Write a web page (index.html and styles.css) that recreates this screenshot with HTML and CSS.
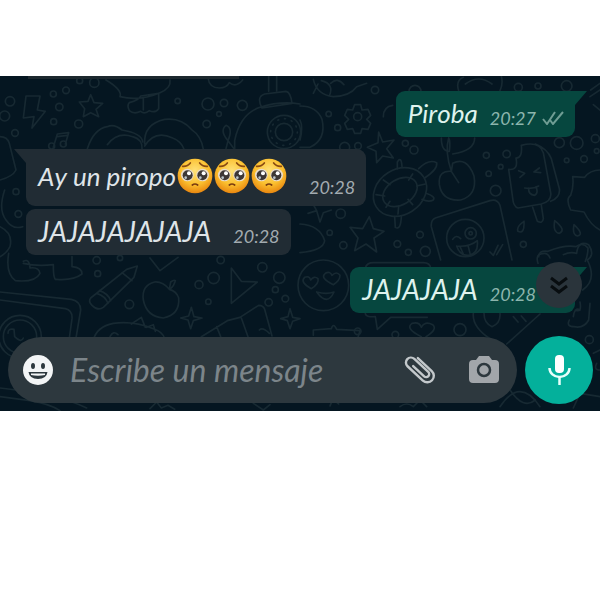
FILE: index.html
```html
<!DOCTYPE html>
<html lang="es">
<head>
    <meta charset="UTF-8">
    <meta name="viewport" content="width=device-width, initial-scale=1.0">
    <title>Chat</title>
    <link rel="stylesheet" href="styles.css">
</head>
<body>
    <svg class="sprite" aria-hidden="true">
        <defs>
            <radialGradient id="skin" cx="50%" cy="35%" r="65%">
                <stop offset="0" stop-color="#ffe27a"/>
                <stop offset="0.6" stop-color="#fbc02f"/>
                <stop offset="1" stop-color="#e8860f"/>
            </radialGradient>
        </defs>
        <symbol id="pleading" viewBox="0 0 108 108">
            <circle cx="54" cy="54" r="52" fill="url(#skin)"/>
            <circle cx="31" cy="51" r="19" fill="#e9dccb"/>
            <circle cx="77" cy="51" r="19" fill="#e9dccb"/>
            <circle cx="32" cy="52" r="15" fill="#3d3736"/>
            <circle cx="76" cy="52" r="15" fill="#3d3736"/>
            <circle cx="36" cy="46" r="6" fill="#fff"/>
            <circle cx="80" cy="46" r="6" fill="#fff"/>
            <circle cx="26" cy="59" r="4" fill="#b9c4cc"/>
            <circle cx="70" cy="59" r="4" fill="#b9c4cc"/>
            <path d="M17 25Q32 26 40 15M68 15Q76 26 91 25" fill="none" stroke="#8a4b12" stroke-width="5" stroke-linecap="round"/>
            <path d="M46 81Q54 75 62 81" fill="none" stroke="#7a3c10" stroke-width="5" stroke-linecap="round"/>
        </symbol>
        <symbol id="ticks" viewBox="0 0 22 14">
            <path d="M1 8l4 5L13 1M8 9l3 4L21 1" fill="none" stroke="currentColor" stroke-width="2"/>
        </symbol>
    </svg>

    <main class="chat">
        <svg class="doodles" viewBox="0 0 1800 1005" preserveAspectRatio="xMidYMid slice" aria-hidden="true">
            <!-- top left -->
            <g transform="translate(0 -18)">
                <path d="M78 78l42 0-8 42 24 4-40 50 6-34-32 4z"/>
                <path d="M272 74l10 24 26 2-20 18 8 22-24-12-22 12 4-24-16-20 26-2z"/>
                <path d="M318 30q50 30 42 50 60 14 120-12 34-14 30-38M388 98q30-8 34-20l54-8v46q-10 14-28 6-14 12-26 2-20 10-34-2-8-16 0-24M430 84v36"/>
                <path d="M160 232l12-40 34-4-10 34M172 200l30-4"/>
                <circle cx="155" cy="228" r="9"/><circle cx="190" cy="222" r="9"/>
                <path d="M262 236q20-60 60-66 20-10 44 10 60 10 62 36M322 224q30-40 76-24 30 8 28 36M434 222q-4-60 60-74 50-6 80 30 30 20 36 60M434 228q30-50 84-24 26 10 34 34"/>
                <path d="M624 24q4 30 34 30 22 0 30-16 20 16 40-8"/>
                <path d="M806 18v46M830 18v44M794 72l64-8q14 2 18 36l-90 14q-18-34 8-42M780 112q-60 20-76 100v24M780 112q60-20 120-10"/>
                <circle cx="852" cy="186" r="50"/><circle cx="852" cy="186" r="40" stroke-dasharray="3 18"/><circle cx="852" cy="186" r="26"/>
                <path d="M684 212q-26-30-6-46 22 8 6 46l-6 24M684 212l18 24"/>
                <path d="M0 200q22 0 28 20l20 80q-10 20-48 30"/>
                <path d="M14 360q-20 60 4 90 20 30 50 20M0 470q40 20 30 60-10 20-30 30"/>
                <circle cx="30" cy="94" r="14"/><circle cx="14" cy="138" r="15"/><circle cx="45" cy="189" r="10"/>
                <circle cx="160" cy="72" r="9"/><circle cx="198" cy="61" r="10"/><circle cx="178" cy="111" r="11"/><circle cx="161" cy="155" r="9"/><circle cx="236" cy="162" r="12"/>
                <circle cx="283" cy="38" r="14"/><circle cx="239" cy="32" r="9"/><circle cx="533" cy="93" r="8"/>
                <circle cx="624" cy="102" r="18"/><circle cx="672" cy="99" r="11"/><circle cx="727" cy="106" r="15"/><circle cx="657" cy="132" r="7"/><circle cx="620" cy="162" r="11"/>
                <circle cx="48" cy="365" r="9"/><circle cx="55" cy="432" r="10"/>
            </g>
            <!-- top right -->
            <g transform="translate(900 -18)">
                <path d="M40 28q10 46 60 52 50-2 70-30l30-10M40 70l14-28M64 32q40 10 24 46M92 40q20-20 40 4"/>
                <path d="M0 108q50 0 66 40 14 60-36 84H0M0 150q10 20 0 60"/>
                <path d="M164 104h18l4 16 18-2 8 18-12 12 12 12-8 18-18-2-4 14h-18l-6-14-16 2-8-18 12-12-12-12 8-18 16 2z"/><circle cx="173" cy="140" r="12"/>
                <path d="M236 186l12 30 34-6-22 26 20 28-32-6-18 20-2-34-26-12 32-14z"/>
                <ellipse cx="300" cy="366" rx="84" ry="68" transform="rotate(-32 300 366)"/><ellipse cx="300" cy="366" rx="56" ry="38" transform="rotate(-32 300 366)"/>
                <path d="M292 296v-20q12-20 14 14M356 296q30-30 54-18 4 20-36 46M378 370q30 10 22 20-14 8-34-2M284 440l2 32q16 10 18-32M250 330l20 14M228 374l26 4M258 412l12-18M338 312l-12 18M376 342l-26 6M338 404l-14-16M294 432l2-24"/>
                <path d="M454 304q-40-4-36 40 8 50 64 46 50-14 40-72-22-60-64-38l-4 24 22 34M454 304q-20-60-8-100M424 204q0 40 24 40 4-30-2-40M458 252q66-10 66-48"/>
                <path d="M664 226q54-14 66 22l22 120q4 26-28 34l-70 12q-14-4-16-30l-12-86q30 4 22-34 20 0 16-38M706 222q36 14 48 44l24 90q4 26-26 38M698 412l14 42q16 8 18-8l-6-40M656 302l18 8-14 12M718 294l-16 12 20 2M674 354q24 4 42-6M686 354q-2 20 18 22 12-6 4-26"/>
                <path d="M406 444l164-52q22-6 30 14l36 164M406 444q-14 6-12 26l28 100"/>
                <circle cx="496" cy="504" r="56"/><circle cx="512" cy="490" r="17"/><circle cx="512" cy="490" r="5"/>
                <path d="M458 508q10-16 24-2M470 528q38 4 62-16 4 40-26 44-26 2-36-28M480 530l10 22M504 526l6 24M570 546l10 10 14-30M590 554l18-30"/>
                <path d="M900 300q-30 0-46 22l-36-2q4 30-6 56-16 10 0 44l40 6q20 40 48 54"/>
                <path d="M208 440l12 36 32 8-30 20 8 42-32-24-34 20 10-38-24-32 38 4z"/>
                <path d="M0 462q60 4 74 50-4 30-74 36M24 430l26-8-10-18M50 422l10 34 10-28 24-8"/>
                <path d="M476 62q-10-30 14-40M600 62q10-20 4-44M496 42q40-30 80 0M870 80l30-20M880 104l20 16M872 60l28-20"/>
                <path d="M250 140q0-30 28-34M672 454q-24 16-18 30 20 10 18-30M764 452q-6 36 14 38 22-10-14-38M822 464q-6 30 10 34 22-4-10-34"/>
                <path d="M716 560q0-20 28-16 50-20 84-14 20-16 36 4 0 20-8 40"/>
                <circle cx="225" cy="60" r="11"/><circle cx="345" cy="64" r="18"/><circle cx="86" cy="132" r="8"/><circle cx="113" cy="173" r="9"/><circle cx="134" cy="232" r="15"/><circle cx="174" cy="228" r="10"/>
                <circle cx="316" cy="220" r="9"/><circle cx="342" cy="240" r="12"/><circle cx="559" cy="256" r="9"/><circle cx="620" cy="252" r="11"/><circle cx="602" cy="290" r="7"/><circle cx="566" cy="311" r="8"/><circle cx="587" cy="362" r="16"/>
                <circle cx="655" cy="52" r="12"/><circle cx="714" cy="48" r="9"/><circle cx="800" cy="48" r="16"/><circle cx="778" cy="218" r="15"/><circle cx="830" cy="219" r="19"/><circle cx="886" cy="206" r="12"/><circle cx="852" cy="267" r="10"/><circle cx="800" cy="271" r="7"/><circle cx="890" cy="243" r="7"/>
                <circle cx="122" cy="431" r="14"/><circle cx="89" cy="488" r="8"/><circle cx="130" cy="526" r="11"/><circle cx="292" cy="522" r="10"/><circle cx="360" cy="494" r="10"/><circle cx="325" cy="547" r="9"/><circle cx="376" cy="544" r="15"/><circle cx="670" cy="523" r="9"/>
            </g>
            <!-- bottom left -->
            <g transform="translate(0 492)">
                <path d="M26 40q-10 60 20 82 60 6 74-22-4-20-30-16-2-30-20-20M70 70q40 10 90 4 0 50 10 44 50 4 76-16 0-20-30-22v-30"/>
                <path d="M272 174l108-86 32-10-10 34-92 90q-16 12-34-6-12-12-4-22M366 98l30 24M290 160q26 8 34 30M298 152q26 8 34 30"/>
                <path d="M508 148q-20-24-44-22-40 10-34 54 10 50 60 54 50-10 46-60-6-20-28-26l4-22q10-8 14-4-4 16-14 24"/>
                <path d="M694 84l30 40 48 2-78 64z"/>
                <path d="M574 202l8 28 24 4-26 8-8 24-8-26-22-6 24-6zM870 206l8 26 22 4-22 8-8 22-8-24-20-6 22-6z"/>
                <path d="M0 156l214 22q28 6 28 32l-14 84M0 180l196 26q22 6 20 30l-8 58"/>
                <circle cx="60" cy="290" r="64"/><circle cx="60" cy="290" r="50"/>
                <path d="M24 280q0-16 18-12l2 22q20 20 26 4"/>
                <path d="M280 300q10-40 60-50 60-8 120 16 30 10 34 30M394 252l30-20 12 30M440 262l20-8 6 20M330 290q10-20 24-6"/>
                <path d="M604 290l78-48 38-10 56-36q14 0 18 12l22 80M650 260l12 30M724 234l20 56M778 270q10-10 30 10"/>
                <path d="M450 54l30 38 54-40M0 444q180 20 260 60M0 470l90 12q60 10 90 30M450 506l20-20 14 18 20-8 20 12M760 490l30 20 20-16"/>
                <circle cx="290" cy="61" r="11"/><circle cx="293" cy="101" r="9"/><circle cx="360" cy="54" r="8"/><circle cx="388" cy="193" r="13"/><circle cx="662" cy="60" r="11"/><circle cx="641" cy="114" r="17"/><circle cx="597" cy="134" r="12"/><circle cx="625" cy="185" r="8"/><circle cx="787" cy="82" r="14"/><circle cx="838" cy="113" r="17"/><circle cx="826" cy="149" r="9"/><circle cx="856" cy="176" r="10"/><circle cx="806" cy="187" r="11"/>
            </g>
            <!-- bottom right -->
            <g transform="translate(900 492)">
                <circle cx="70" cy="136" r="76"/>
                <path d="M34 146q-36-20-20-34 14-6 18 8 10-14 22-4 4 14-20 30M100 134q-42-20-24-34 14-8 20 6 14-14 24 0 0 16-20 28M50 156q30 8 52 0-20 44-52 0"/>
                <path d="M196 84q4-16 24-16h150q20 0 22 16M196 220q0 12 30 10l6 38 40-36h110M364 290q-50-24-28-40 22-6 28 12 10-20 34-8 16 14-20 36"/>
                <circle cx="480" cy="269" r="18"/><circle cx="173" cy="274" r="10"/><circle cx="286" cy="284" r="10"/><circle cx="868" cy="299" r="12"/>
                <path d="M520 220q-4 40 50 76M552 220q0 30 24 40 26-10 24-40M640 230l14 16M664 228l14 16M720 222l-100 90"/>
                <path d="M714 70q-10-30 20-30 10 0 16 14M790 44q20-10 40-4 4-40 36-26 20 30-4 46 30 60-14 90M826 210q20 10 14-24M808 240q-10 20 14 20 30 6 44-20l4-50M820 230q4-30 20-20"/>
                <path d="M40 286v-16l54-4q6-20 16 2l70 4-6 20M90 498q8-26 26-6M300 500q20-16 40 0M340 500l20-20 20 20M600 500q60-90 120 0M630 450q40 60 76 30"/>
                <path d="M880 340l20-10M890 370q-10 20 10 20M820 504l20-44 60 10"/>
            </g>
        </svg>

        <div class="previous"></div>

        <div class="bubble out tail">
            <span class="text">Piroba</span>
            <time>20:27</time>
            <svg class="ticks" role="img" aria-label="Entregado"><use href="#ticks"/></svg>
        </div>
        <div class="bubble in tail tall">
            <span class="text">Ay un piropo<svg class="emoji"><use href="#pleading"/></svg><svg class="emoji"><use href="#pleading"/></svg><svg class="emoji"><use href="#pleading"/></svg></span>
            <time>20:28</time>
        </div>
        <div class="bubble in next">
            <span class="text caps">JAJAJAJAJAJA</span>
            <time>20:28</time>
        </div>
        <div class="bubble out tail">
            <span class="text caps">JAJAJAJA</span>
            <time>20:28</time>
            <svg class="ticks" role="img" aria-label="Entregado"><use href="#ticks"/></svg>
            <button type="button" class="scroll-down" aria-label="Ir al final">
                <svg viewBox="0 0 18 18"><path d="M1 2l8 6 8-6M1 10l8 6 8-6" fill="none" stroke="#080d10" stroke-width="3"/></svg>
            </button>
        </div>

        <form class="composer">
            <div class="field">
                <button type="button" aria-label="Emojis">
                    <svg class="icon" viewBox="0 0 30 30">
                        <circle cx="15" cy="15" r="15" fill="#f3f5f6"/>
                        <ellipse cx="10" cy="11" rx="2" ry="3" fill="#2d383e"/>
                        <ellipse cx="20" cy="11" rx="2" ry="3" fill="#2d383e"/>
                        <path d="M5.500 17h19q-1 7-9.500 7t-9.500-7z" fill="#2d383e"/>
                        <path d="M8 18.500h14v1.500q-7 1.500-14 0z" fill="#f3f5f6"/>
                    </svg>
                </button>
                <input type="text" placeholder="Escribe un mensaje" aria-label="Escribe un mensaje">
                <button type="button" aria-label="Adjuntar">
                    <svg class="icon" viewBox="0 0 30 30">
                        <g transform="translate(15 14) rotate(-47)" fill="none" stroke="#c3c8cb" stroke-width="2.400" stroke-linecap="round">
                            <path d="M6.500-9V10a6.500 6.500 0 0 1-13 0V-11a5 5 0 0 1 10 0V8a3 3 0 0 1-6 0V-7"/>
                        </g>
                    </svg>
                </button>
                <button type="button" class="camera" aria-label="Cámara">
                    <svg class="icon" viewBox="0 0 30 30">
                        <path d="M10 1h10l3 4h3q4 0 4 4v15q0 4-4 4H4q-4 0-4-4V9q0-4 4-4h3z" fill="#a2a6aa"/>
                        <circle cx="15" cy="15" r="6" fill="none" stroke="#2d383e" stroke-width="2.500"/>
                    </svg>
                </button>
            </div>
            <button type="button" class="mic" aria-label="Grabar audio">
                <svg viewBox="0 0 22 30">
                    <rect x="7" y="0" width="9" height="18" rx="4" fill="#fff"/>
                    <path d="M1.500 13a10 9 0 0 0 20 0M11.500 22v8" fill="none" stroke="#e8fffb" stroke-width="2.500"/>
                </svg>
            </button>
        </form>
    </main>
</body>
</html>
```

FILE: styles.css
```css
*{box-sizing: border-box;}
body{margin: 0; background: #fff; font-family: Lato, "Open Sans", sans-serif; font-style: italic; font-kerning: none;}
button{border: 0; padding: 0; background: none; cursor: pointer;}
button svg{display: block; overflow: visible;}
.sprite{position: absolute; width: 0; height: 0;}

.chat{position: relative; display: flex; flex-direction: column; margin-top: 76px; padding: 0 7px 7px 8px; background: #051621; overflow: hidden;}
.doodles{position: absolute; top: 0; left: 0; width: 100%; height: 100%; fill: none; stroke: #172932; stroke-width: 5; stroke-linejoin: round; stroke-linecap: round;}
.previous{position: relative; width: 36%; height: 3px; margin-left: 20px; background: #1c282e;}

.bubble{position: relative; display: flex; align-items: flex-end; height: 46px; margin-top: 12px; padding: 0 11px 8px 12px; border-radius: 9px;}
.in{align-self: flex-start; margin-left: 18px; background: #212c34; color: #dfe4e8; gap: 22px;}
.out{align-self: flex-end; margin-right: 18px; background: #06473f; color: #dff3ee; gap: 12px;}
.tall{height: 57px;}
.next{margin-top: 3px;}
.in.tail{border-top-left-radius: 0;}
.out.tail{border-top-right-radius: 0;}
.tail::before{content: ""; position: absolute; top: 0; width: 12px; height: 14px; background: inherit;}
.in.tail::before{right: 100%; clip-path: polygon(0 0, 100% 0, 100% 100%);}
.out.tail::before{left: 100%; clip-path: polygon(0 0, 100% 0, 0 100%);}

.text{display: flex; align-items: center; font-size: 26px; line-height: 32px; white-space: pre;}
.caps{font-size: 28px;}
.tall .text{height: 44px;}
.emoji{width: 36px; height: 36px; margin-left: 1px;}
time{font-size: 18px; line-height: 22px; color: #a3abb0;}
.out time{color: #8cb5ad;}
.ticks{width: 22px; height: 14px; margin: 0 0 4px -6px; color: #6f9d94;}

.scroll-down{position: absolute; top: -5px; right: -7px; display: flex; align-items: center; justify-content: center; width: 46px; height: 46px; border-radius: 50%; background: #2a343b;}
.scroll-down svg{width: 18px; height: 18px;}

.composer{position: relative; display: flex; align-items: center; gap: 8px; margin: 23px 0 0;}
.field{flex: 1; display: flex; align-items: center; min-width: 0; height: 66px; padding: 0 18px 0 15px; border-radius: 33px; background: #2d383e;}
.icon{width: 30px; height: 30px;}
.field input{flex: 1; min-width: 0; margin: 0 8px 0 17px; padding: 0; border: 0; outline: 0; background: none; color: #dfe4e8; font: inherit; font-kerning: none; font-size: 32px; line-height: 40px;}
.field input::placeholder{color: #7c858a; opacity: 1;}
.camera{margin-left: 34px;}
.mic{display: flex; align-items: center; justify-content: center; width: 68px; height: 68px; border-radius: 50%; background: #04b09b;}
.mic svg{width: 22px; height: 30px;}
```
